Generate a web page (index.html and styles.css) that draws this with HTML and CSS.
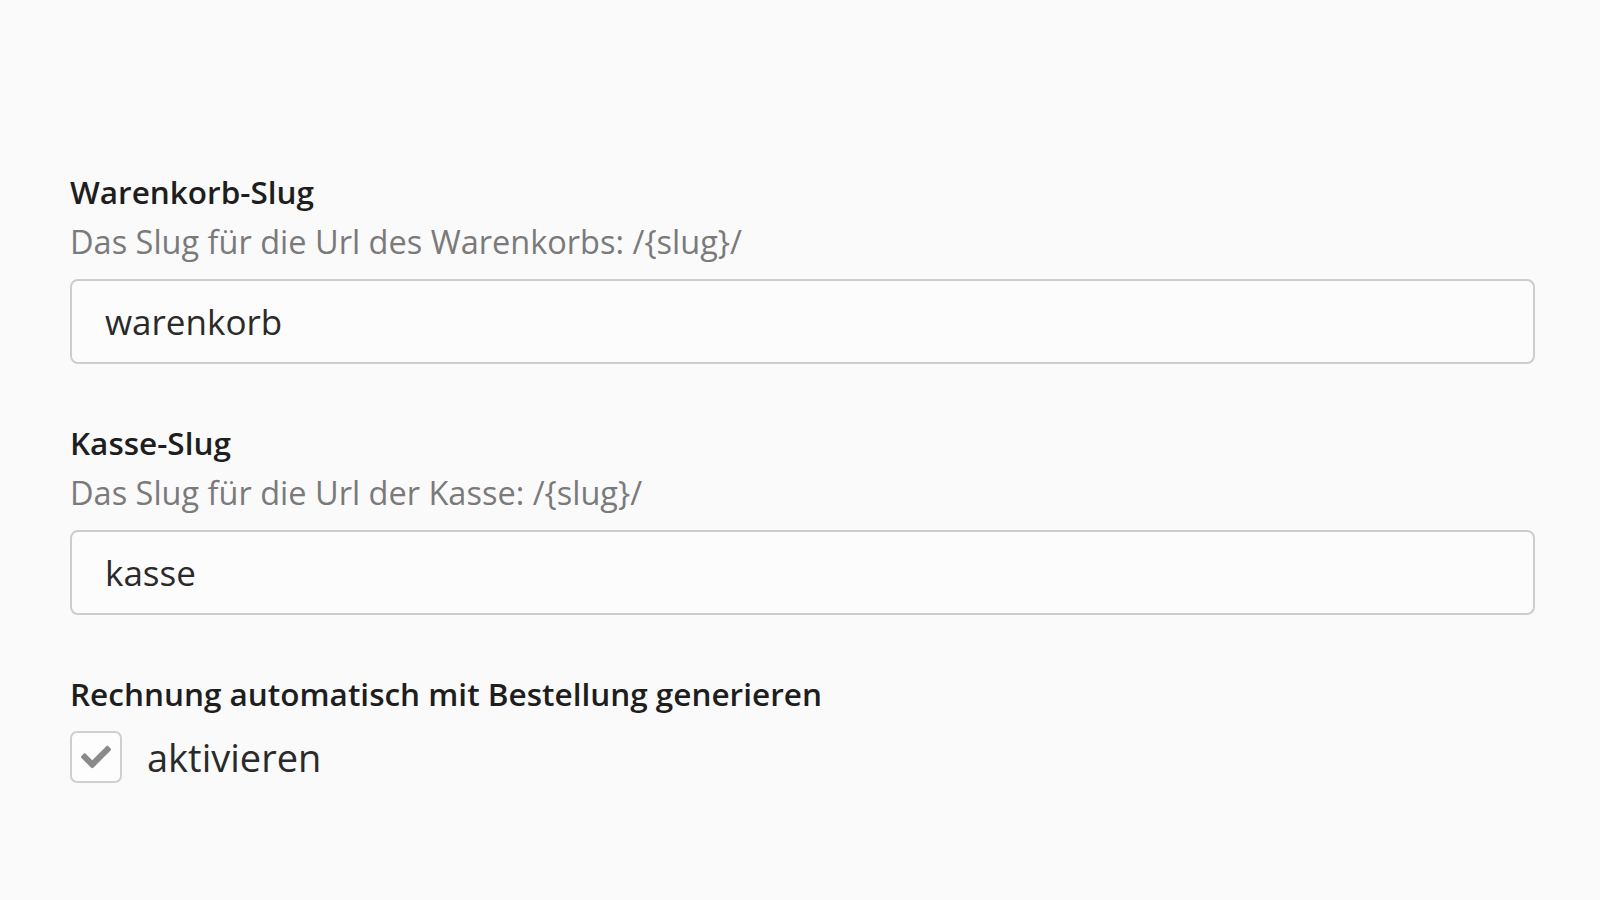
FILE: index.html
```html
<!DOCTYPE html>
<html lang="de">
<head>
    <meta charset="UTF-8">
    <meta name="viewport" content="width=device-width, initial-scale=1.0">
    <title>Shop-Einstellungen</title>
    <link rel="stylesheet" href="styles.css">
</head>
<body>
    <div class="settings">
        <div class="field">
            <label class="field-label" for="cartSlug">Warenkorb-Slug</label>
            <div class="field-help">Das Slug für die Url des Warenkorbs: /{slug}/</div>
            <input class="field-input" id="cartSlug" type="text" value="warenkorb">
        </div>

        <div class="field">
            <label class="field-label" for="checkoutSlug">Kasse-Slug</label>
            <div class="field-help">Das Slug für die Url der Kasse: /{slug}/</div>
            <input class="field-input" id="checkoutSlug" type="text" value="kasse">
        </div>

        <div class="field">
            <div class="field-label">Rechnung automatisch mit Bestellung generieren</div>
            <label class="check">
                <span class="check-box">
                    <svg viewBox="0 0 512 512" width="30" height="30"><path d="M173.9 439.4l-166.4-166.4c-10-10-10-26.2 0-36.2l36.2-36.2c10-10 26.2-10 36.2 0L192 312.7 432.1 72.6c10-10 26.2-10 36.2 0l36.2 36.2c10 10 10 26.2 0 36.2l-294.4 294.4c-10 10-26.2 10-36.2 0z"/></svg>
                </span>
                <span class="check-text">aktivieren</span>
            </label>
        </div>
    </div>
</body>
</html>
```

FILE: styles.css
```css
body {
    margin: 0;
    background: #fafafa;
    font-family: 'Open Sans', 'Liberation Sans', sans-serif;
    color: #222;
}
.settings {
    padding: 172px 65px 0 70px;
}
.field {
    margin-bottom: 59px;
}
.field-label {
    display: block;
    font-size: 31.5px;
    font-weight: 600;
    line-height: 40px;
    color: #1e1e1e;
}
.field-help {
    margin-top: 10px;
    font-size: 32.5px;
    line-height: 40px;
    color: #7a7a7a;
}
.field-input {
    display: block;
    box-sizing: border-box;
    width: 100%;
    height: 85px;
    margin-top: 17px;
    padding: 0 33px;
    border: 2px solid #cdcdcd;
    border-radius: 8px;
    background: #fcfcfc;
    font-family: inherit;
    font-size: 35px;
    color: #2a2a2a;
    outline: none;
}
.check {
    display: flex;
    align-items: center;
    gap: 25px;
    margin-top: 17px;
}
.check-box {
    display: flex;
    align-items: center;
    justify-content: center;
    box-sizing: border-box;
    width: 52px;
    height: 52px;
    border: 2px solid #cfcfcf;
    border-radius: 7px;
    background: #fdfdfd;
}
.check-box svg {
    fill: #8a8a8a;
}
.check-text {
    font-size: 38px;
    color: #2a2a2a;
}
```
